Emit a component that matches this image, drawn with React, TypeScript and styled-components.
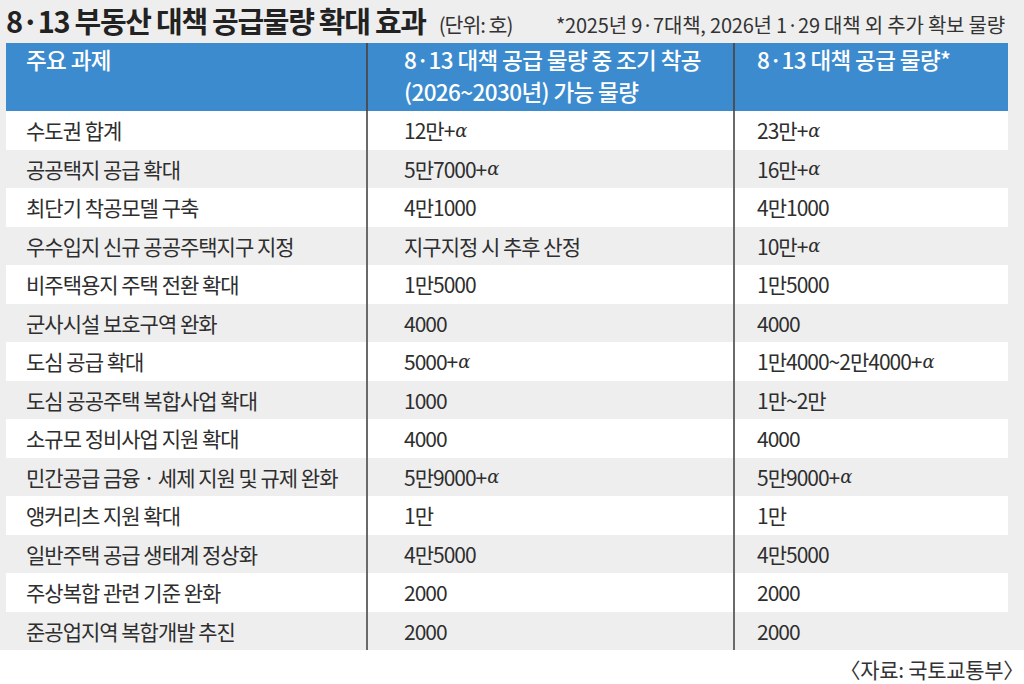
import React from "react";
import styled, { createGlobalStyle } from "styled-components";

const Global = createGlobalStyle`
  html, body { margin: 0; padding: 0; background: #ffffff; }
  body { font-family: "Noto Sans CJK KR", "Noto Sans", sans-serif; color: #2b2b2b; }
  * { box-sizing: border-box; }
`;

const Page = styled.div`
  width: 1024px;
  height: 684px;
  display: flex;
  flex-direction: column;
  background: #ffffff;
`;

const Panel = styled.div`
  background: #eeeeee;
  padding: 0 16px 0 6px;
  display: flex;
  flex-direction: column;
`;

const TitleBar = styled.div`
  height: 43px;
  display: flex;
  align-items: baseline;
  white-space: nowrap;
`;

const Title = styled.h1`
  margin: 0;
  font-size: 29px;
  line-height: 40px;
  font-weight: 700;
  letter-spacing: -1.3px;
  color: #222222;
`;

const Unit = styled.span`
  margin-left: 13px;
  font-size: 20.5px;
  font-weight: 400;
  letter-spacing: -1px;
  color: #333333;
`;

const Note = styled.span`
  margin-left: auto;
  margin-right: 3px;
  font-size: 20px;
  font-weight: 400;
  letter-spacing: -0.2px;
  color: #333333;
`;

const Table = styled.div`
  display: grid;
  grid-template-columns: 360px 367px 275px;
  grid-template-rows: 68px;
  grid-auto-rows: 38.5px;
`;

const HeadCell = styled.div<{ $pad: number; $divider?: boolean }>`
  background: #3d8bcf;
  color: #ffffff;
  font-size: 22.5px;
  font-weight: 500;
  letter-spacing: -0.6px;
  line-height: 32px;
  padding-left: ${(p) => p.$pad}px;
  padding-top: 0;
  border-left: ${(p) => (p.$divider ? "2px solid #4a4f57" : "none")};
  white-space: nowrap;
`;

const Cell = styled.div<{ $pad: number; $divider?: boolean; $alt: boolean }>`
  background: ${(p) => (p.$alt ? "#eeeeee" : "#ffffff")};
  display: flex;
  align-items: center;
  padding-left: ${(p) => p.$pad}px;
  font-size: 21px;
  font-weight: 400;
  letter-spacing: -1px;
  color: #2e2e2e;
  border-left: ${(p) => (p.$divider ? "2px solid #6a6a6a" : "none")};
  white-space: nowrap;
`;

const Alpha = styled.span`
  font-family: "DejaVu Serif", "Liberation Serif", serif;
  font-style: italic;
  font-size: 18px;
  letter-spacing: 0;
  margin-left: 1px;
`;

const Source = styled.div`
  display: flex;
  justify-content: flex-end;
  padding: 4px 0 0 0;
  font-size: 21px;
  letter-spacing: -0.3px;
  color: #333333;
  white-space: nowrap;
`;

type Row = [string, string, string];

const rows: Row[] = [
  ["수도권 합계", "12만+α", "23만+α"],
  ["공공택지 공급 확대", "5만7000+α", "16만+α"],
  ["최단기 착공모델 구축", "4만1000", "4만1000"],
  ["우수입지 신규 공공주택지구 지정", "지구지정 시 추후 산정", "10만+α"],
  ["비주택용지 주택 전환 확대", "1만5000", "1만5000"],
  ["군사시설 보호구역 완화", "4000", "4000"],
  ["도심 공급 확대", "5000+α", "1만4000~2만4000+α"],
  ["도심 공공주택 복합사업 확대", "1000", "1만~2만"],
  ["소규모 정비사업 지원 확대", "4000", "4000"],
  ["민간공급 금융 · 세제 지원 및 규제 완화", "5만9000+α", "5만9000+α"],
  ["앵커리츠 지원 확대", "1만", "1만"],
  ["일반주택 공급 생태계 정상화", "4만5000", "4만5000"],
  ["주상복합 관련 기준 완화", "2000", "2000"],
  ["준공업지역 복합개발 추진", "2000", "2000"],
];

function Value({ text }: { text: string }) {
  if (text.endsWith("α")) {
    return (
      <>
        {text.slice(0, -1)}
        <Alpha>α</Alpha>
      </>
    );
  }
  return <>{text}</>;
}

export default function App() {
  return (
    <Page>
      <Global />
      <Panel>
        <TitleBar>
          <Title>8·13 부동산 대책 공급물량 확대 효과</Title>
          <Unit>(단위: 호)</Unit>
          <Note>*2025년 9·7대책, 2026년 1·29 대책 외 추가 확보 물량</Note>
        </TitleBar>
        <Table>
          <HeadCell $pad={20}>주요 과제</HeadCell>
          <HeadCell $pad={36} $divider>
            8·13 대책 공급 물량 중 조기 착공
            <br />
            (2026~2030년) 가능 물량
          </HeadCell>
          <HeadCell $pad={22} $divider>
            8·13 대책 공급 물량*
          </HeadCell>
          {rows.map((r, i) => (
            <React.Fragment key={i}>
              <Cell $pad={20} $alt={i % 2 === 1}>
                {r[0]}
              </Cell>
              <Cell $pad={36} $divider $alt={i % 2 === 1}>
                <Value text={r[1]} />
              </Cell>
              <Cell $pad={22} $divider $alt={i % 2 === 1}>
                <Value text={r[2]} />
              </Cell>
            </React.Fragment>
          ))}
        </Table>
      </Panel>
      <Source>〈자료: 국토교통부〉</Source>
    </Page>
  );
}
